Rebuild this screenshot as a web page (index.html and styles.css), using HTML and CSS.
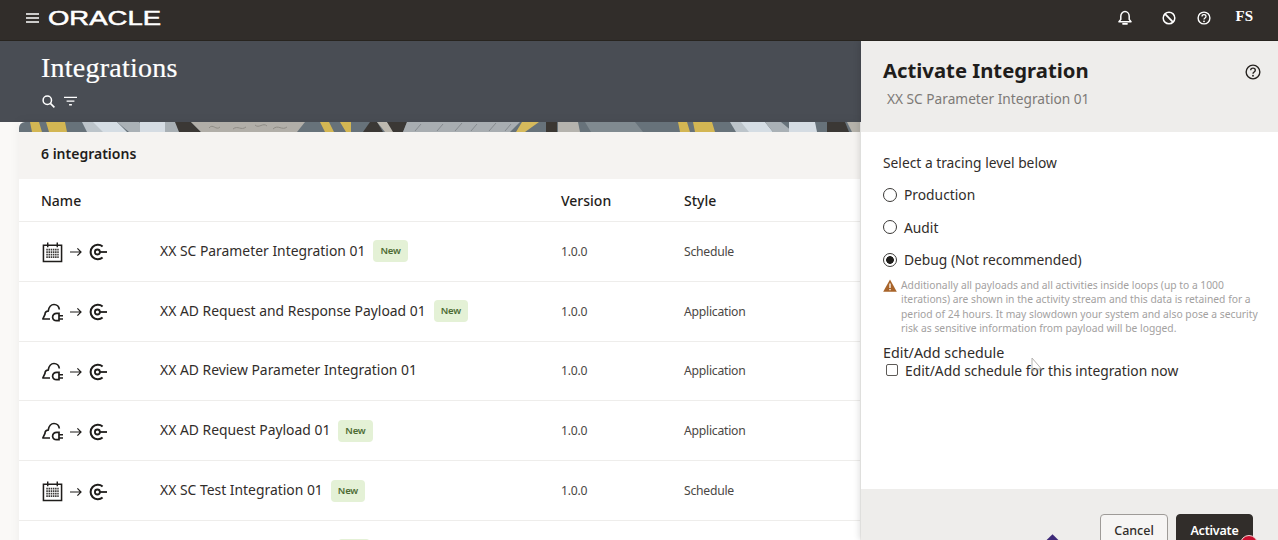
FILE: index.html
```html
<!DOCTYPE html>
<html lang="en">
<head>
  <meta charset="UTF-8" />
  <title>Integrations</title>
  <link rel="stylesheet" href="styles.css">
</head>
<body>
  <svg class="icon-defs" width="0" height="0">
    <defs>
      <symbol id="ico-calendar" viewBox="0 0 22 22">
        <path d="M1.5 3.5h19v17h-19z" fill="none" stroke="#1f1d1b" stroke-width="1.6"/>
        <path d="M6 0.5v5M16 0.5v5" fill="none" stroke="#1f1d1b" stroke-width="1.5"/>
        <path d="M4.500 8h13M4.500 10.600h13M4.500 13.200h13M4.500 15.800h13" fill="none" stroke="#3a3836" stroke-width="1.700" stroke-dasharray="1.600 0.700"/>
      </symbol>
      <symbol id="ico-cloud" viewBox="0 0 21 18">
        <path d="M5 15.500H.8L3 10.800C2.900 8.800 4.500 7.300 6.200 7.600 6.800 3.800 9.200 1 12 1c2.800 0 5 2.200 5.300 5" fill="none" stroke="#1f1d1b" stroke-width="1.700" stroke-linejoin="round"/>
        <path d="M5 15.500h3M17 12.200h4M17 15.400h4" fill="none" stroke="#1f1d1b" stroke-width="1.500"/>
        <path d="M17 9.800h-2.400a4 4 0 0 0-4 4 4 4 0 0 0 4 3.400H17z" fill="none" stroke="#1f1d1b" stroke-width="1.700"/>
      </symbol>
      <symbol id="ico-arrow" viewBox="0 0 12 10">
        <path d="M0 5h11M7.400 1.400 11 5 7.400 8.600" fill="none" stroke="#1f1d1b" stroke-width="1.200"/>
      </symbol>
      <symbol id="ico-connect" viewBox="0 0 18 18">
        <path d="M13.600 3.400A7.300 7.300 0 1 0 13.600 14.600" fill="none" stroke="#1f1d1b" stroke-width="2"/>
        <circle cx="8.400" cy="9" r="2.500" fill="none" stroke="#1f1d1b" stroke-width="1.800"/>
        <path d="M10.500 9H18" stroke="#1f1d1b" stroke-width="1.800"/>
      </symbol>
    </defs>
  </svg>

  <header class="topbar">
    <div class="brand">
      <svg class="menu-icon" width="13" height="10" viewBox="0 0 13 10"><path d="M0 1h13M0 5h13M0 9h13" stroke="#fff" stroke-width="1.400"/></svg>
      <svg class="logo" width="114" height="20" viewBox="0 0 114 20"><text x="0" y="16.500" textLength="113" lengthAdjust="spacingAndGlyphs">ORACLE</text></svg>
    </div>
    <div class="top-actions">
      <svg class="bell" width="14" height="16" viewBox="0 0 14 16"><path d="M1 11.800h12l-1.800-2.400V6.200C11.200 3.600 9.400 1.600 7 1.600S2.800 3.600 2.800 6.200v3.200z" fill="none" stroke="#fff" stroke-width="1.500" stroke-linejoin="round"/><path d="M5 13.800h4" stroke="#fff" stroke-width="1.800" stroke-linecap="round"/></svg>
      <svg class="block" width="14" height="14" viewBox="0 0 14 14"><circle cx="7" cy="7" r="5.800" fill="none" stroke="#fff" stroke-width="1.500"/><path d="M3.200 3.200l7.600 7.600" stroke="#fff" stroke-width="1.800"/></svg>
      <svg class="help" width="14" height="14" viewBox="0 0 14 14"><circle cx="7" cy="7" r="5.900" fill="none" stroke="#fff" stroke-width="1.400"/><path d="M5 5.400C5 4.200 6 3.600 7 3.600s2 .7 2 1.800C9 7 7 6.900 7 8.500" fill="none" stroke="#fff" stroke-width="1.300"/><circle cx="7" cy="10.300" r=".9" fill="#fff"/></svg>
      <span class="avatar">FS</span>
    </div>
  </header>

  <div class="main">
    <div class="page">
      <section class="hero">
        <h1>Integrations</h1>
        <div class="hero-tools">
          <svg width="13" height="13" viewBox="0 0 13 13"><circle cx="5.300" cy="5.300" r="4.200" fill="none" stroke="#fff" stroke-width="1.500"/><path d="M8.400 8.400l4 4" stroke="#fff" stroke-width="1.600"/></svg>
          <svg width="13" height="11" viewBox="0 0 14 11"><path d="M0 1h14M2.800 5h8.400M5.500 9h3" stroke="#fff" stroke-width="1.400"/></svg>
        </div>
      </section>
      <div class="list-wrap">
        <svg class="banner" width="841" height="10" viewBox="0 0 841 10" preserveAspectRatio="none">
          <rect width="841" height="10" fill="#67727a"/>
          <path d="M11 0h9l3 10H13zM27 0h19l2 10H30z" fill="#d3b653"/>
          <path d="M63 0h14l8 10H68z" fill="#bcc4ca"/>
          <path d="M74 0h24l10 10H84z" fill="#d5dde4"/>
          <path d="M98 0h22l10 10h-20z" fill="#aab1b6"/>
          <path d="M121 0h30l3 10h-33z" fill="#d5dce3"/>
          <path d="M146 0h11l5 10h-16z" fill="#a8afb4"/>
          <path d="M156 0h16l10 10h-22z" fill="#3b3835"/>
          <path d="M172 0h114l-8 10H182z" fill="#b1aea8"/>
          <path d="M190 6c4-5 7 3 11-1M214 7c5-4 8 2 13-2M236 3c4 4 8-3 12 1M254 7c5-5 9 2 14-2" fill="none" stroke="#8f8c86" stroke-width="1"/>
          <path d="M301 0h9l5 10h-9zM321 0h11v10h-5z" fill="#d3b653"/>
          <path d="M351 0h7l6 10h-20z" fill="#3b3835"/>
          <path d="M358 0h10l8 10h-10z" fill="#bdb9b0"/>
          <path d="M368 0h20l-4 10h-10z" fill="#3b3835"/>
          <path d="M388 0h113l-10 10H384z" fill="#a8adb1"/>
          <path d="M396 9l6-7M418 9l6-7M436 9l7-8M452 9l6-7M470 9l7-8M486 9l6-7" fill="none" stroke="#858a8e" stroke-width="1"/>
          <path d="M503 0h17l-14 10h-9z" fill="#d6ba5c"/>
          <path d="M527 0h11v10h-11z" fill="#3b3733"/>
          <path d="M539 0h20l2 10h-22z" fill="#b5b3ae"/>
          <path d="M566 0h50l8 10h-52z" fill="#808a90"/>
          <path d="M659 0h9l3 10h-10zM674 0h19l3 10h-20z" fill="#d3b653"/>
          <path d="M711 0h14l6 10h-14z" fill="#bcc4ca"/>
          <path d="M722 0h24l8 10h-24z" fill="#d5dde4"/>
          <path d="M746 0h16l12 10h-20z" fill="#aab1b6"/>
          <path d="M770 0h26l2 10h-28z" fill="#d5dce3"/>
          <path d="M808 0h18l4 10h-22z" fill="#3b3835"/>
          <path d="M828 0h13v10h-8z" fill="#b5b2aa"/>
        </svg>
        <div class="count-bar">6 integrations</div>
        <div class="table">
          <div class="row head">
            <div class="col-name">Name</div>
            <div class="col-version">Version</div>
            <div class="col-style">Style</div>
          </div>
          <div class="row">
            <div class="pattern">
              <svg class="ico-trigger" width="21" height="21"><use href="#ico-calendar"/></svg>
              <svg class="ico-arrow"><use href="#ico-arrow"/></svg>
              <svg class="ico-connect"><use href="#ico-connect"/></svg>
            </div>
            <div class="int-name">XX SC Parameter Integration 01 <span class="badge">New</span></div>
            <div class="col-version small">1.0.0</div>
            <div class="col-style small">Schedule</div>
          </div>
          <div class="row">
            <div class="pattern">
              <svg class="ico-trigger" width="21" height="21"><use href="#ico-cloud"/></svg>
              <svg class="ico-arrow"><use href="#ico-arrow"/></svg>
              <svg class="ico-connect"><use href="#ico-connect"/></svg>
            </div>
            <div class="int-name">XX AD Request and Response Payload 01 <span class="badge">New</span></div>
            <div class="col-version small">1.0.0</div>
            <div class="col-style small">Application</div>
          </div>
          <div class="row">
            <div class="pattern">
              <svg class="ico-trigger" width="21" height="21"><use href="#ico-cloud"/></svg>
              <svg class="ico-arrow"><use href="#ico-arrow"/></svg>
              <svg class="ico-connect"><use href="#ico-connect"/></svg>
            </div>
            <div class="int-name">XX AD Review Parameter Integration 01</div>
            <div class="col-version small">1.0.0</div>
            <div class="col-style small">Application</div>
          </div>
          <div class="row">
            <div class="pattern">
              <svg class="ico-trigger" width="21" height="21"><use href="#ico-cloud"/></svg>
              <svg class="ico-arrow"><use href="#ico-arrow"/></svg>
              <svg class="ico-connect"><use href="#ico-connect"/></svg>
            </div>
            <div class="int-name">XX AD Request Payload 01 <span class="badge">New</span></div>
            <div class="col-version small">1.0.0</div>
            <div class="col-style small">Application</div>
          </div>
          <div class="row">
            <div class="pattern">
              <svg class="ico-trigger" width="21" height="21"><use href="#ico-calendar"/></svg>
              <svg class="ico-arrow"><use href="#ico-arrow"/></svg>
              <svg class="ico-connect"><use href="#ico-connect"/></svg>
            </div>
            <div class="int-name">XX SC Test Integration 01 <span class="badge">New</span></div>
            <div class="col-version small">1.0.0</div>
            <div class="col-style small">Schedule</div>
          </div>
          <div class="row">
            <div class="int-name next-row"><span class="badge badge-empty"></span></div>
          </div>
        </div>
      </div>
    </div>

    <aside class="drawer">
      <div class="drawer-head">
        <div>
          <h2>Activate Integration</h2>
          <div class="drawer-sub">XX SC Parameter Integration 01</div>
        </div>
        <svg class="drawer-help" width="16" height="16" viewBox="0 0 14 14"><circle cx="7" cy="7" r="6" fill="none" stroke="#25221f" stroke-width="1.200"/><path d="M5 5.400C5 4.200 6 3.600 7 3.600s2 .7 2 1.800C9 7 7 6.900 7 8.500" fill="none" stroke="#25221f" stroke-width="1.200"/><circle cx="7" cy="10.300" r=".8" fill="#25221f"/></svg>
      </div>
      <div class="drawer-body">
        <div class="field-title">Select a tracing level below</div>
        <label class="radio"><input type="radio" name="level"> Production</label>
        <label class="radio"><input type="radio" name="level"> Audit</label>
        <label class="radio"><input type="radio" name="level" checked> Debug (Not recommended)</label>
        <div class="warning">
          <svg width="14" height="13" viewBox="0 0 14 13"><path d="M7 0.500 13.800 12.800H.2z" fill="#a8642a"/><path d="M7 4.500v4.400M7 10v1.200" stroke="#fff" stroke-width="1.300"/></svg>
          <p>Additionally all payloads and all activities inside loops (up to a 1000<br>iterations) are shown in the activity stream and this data is retained for a<br>period of 24 hours. It may slowdown your system and also pose a security<br>risk as sensitive information from payload will be logged.</p>
        </div>
        <div class="schedule-title">Edit/Add schedule</div>
        <label class="check"><input type="checkbox"> Edit/Add schedule for this integration now</label>
      </div>
      <div class="drawer-foot">
        <button class="btn">Cancel</button>
        <button class="btn btn-dark">Activate</button>
      </div>
      <svg class="pointer" width="12" height="17" viewBox="0 0 12 17"><path d="M1 1v14l3.500-3h6z" fill="none" stroke="#b5b3b1" stroke-width="1"/></svg>
      <span class="marker-diamond"></span>
      <span class="marker-dot"></span>
    </aside>
  </div>
</body>
</html>
```
FILE: styles.css
```css
* {
  box-sizing: border-box;
}
html, body {
  height: 100%;
}
body {
  margin: 0;
  font-family: "Noto Sans", "Open Sans", sans-serif;
  color: #2b2826;
  overflow: hidden;
  background: #fff;
}
.icon-defs {
  position: absolute;
}
.topbar {
  height: 41px;
  background: #312d2a;
  border-bottom: 1px solid #27241f;
  display: flex;
  justify-content: space-between;
  align-items: center;
  padding: 0 25px 5px 26px;
  color: white;
}
.brand {
  display: flex;
  align-items: center;
  gap: 9px;
}
.logo text {
  font-family: "Liberation Sans", sans-serif;
  font-size: 20px;
  font-weight: 400;
  fill: #fff;
  stroke: #fff;
  stroke-width: 0.5px;
}
.top-actions {
  display: flex;
  align-items: center;
}
.top-actions .bell {
  margin-right: 30px;
}
.top-actions .block {
  margin-right: 21px;
}
.top-actions .help {
  margin-right: 24px;
}
.avatar {
  font-family: "Liberation Serif", serif;
  font-size: 15px;
  font-weight: 700;
  margin-top: -3px;
}
.main {
  display: flex;
  height: 499px;
  overflow: hidden;
}
.page {
  width: 861px;
  background: #faf9f7;
  overflow: hidden;
}
.hero {
  height: 81px;
  background: #494d54;
  padding: 10px 41px 0;
  color: white;
}
.hero h1 {
  margin: 0;
  font-family: "Liberation Serif", serif;
  font-size: 28px;
  font-weight: 400;
  line-height: 34px;
  letter-spacing: 0.25px;
  -webkit-text-stroke: 0.2px #fff;
}
.hero-tools {
  display: flex;
  align-items: center;
  gap: 9px;
  margin: 10px 0 0 1px;
}
.list-wrap {
  margin-left: 19px;
  width: 841px;
  box-shadow: 0 0 10px rgba(0, 0, 0, 0.06);
}
.banner {
  display: block;
  border-radius: 6px 0 0 0;
  filter: blur(0.4px);
}
.count-bar {
  height: 47px;
  background: #f5f3f1;
  padding: 0 22px;
  line-height: 44px;
  font-size: 14px;
  font-weight: 600;
  color: #1f1d1b;
}
.table {
  background: white;
}
.row {
  display: grid;
  grid-template-columns: 119px 401px 123px 1fr;
  align-items: center;
  height: 59.8px;
  padding-left: 22px;
  border-bottom: 1px solid #eeedeb;
}
.row.head {
  height: 43px;
  font-size: 14px;
  font-weight: 500;
  color: #1f1d1b;
}
.col-name {
  grid-column: 1 / 3;
}
.pattern {
  display: flex;
  align-items: center;
  margin-top: 2px;
}
.ico-trigger {
  margin: 0 7px 0 1px;
}
.ico-arrow {
  width: 12px;
  height: 10px;
  margin-right: 7px;
}
.ico-connect {
  width: 18px;
  height: 18px;
}
.int-name {
  font-size: 13.900px;
  color: #312d2a;
  display: flex;
  align-items: center;
  gap: 8px;
  padding-bottom: 2px;
}
.next-row {
  grid-column: 2;
  margin-left: 178px;
}
.badge {
  background: #e4f1d6;
  color: #4c6b33;
  font-size: 9.500px;
  font-weight: 600;
  letter-spacing: -0.2px;
  border-radius: 4px;
  padding: 0 7px;
  line-height: 22px;
  height: 22px;
  margin-top: 2px;
}
.badge-empty {
  width: 32px;
}
.small {
  font-size: 12.200px;
  letter-spacing: -0.25px;
  color: #4a4744;
}
.drawer {
  position: relative;
  width: 417px;
  display: flex;
  flex-direction: column;
  background: white;
  box-shadow: -2px 0 6px rgba(0, 0, 0, 0.12);
}
.drawer-head {
  height: 91px;
  background: #eeedeb;
  padding: 14px 17px 0 22px;
  display: flex;
  justify-content: space-between;
  align-items: flex-start;
}
.drawer-head h2 {
  margin: 0;
  font-size: 20.300px;
  font-weight: 700;
  line-height: 30px;
  color: #1f1d1b;
}
.drawer-sub {
  margin: 4px 0 0 4px;
  font-size: 13.700px;
  line-height: 20px;
  color: #7d7a77;
}
.drawer-help {
  margin-top: 9px;
}
.drawer-body {
  flex: 1;
  padding: 20px 22px 0;
  font-size: 13.800px;
  color: #312d2a;
}
.field-title {
  line-height: 21px;
  margin-bottom: 11px;
}
.radio {
  display: flex;
  align-items: center;
  gap: 7px;
  height: 21px;
  margin-bottom: 11.500px;
}
.radio input {
  appearance: none;
  width: 14px;
  height: 14px;
  margin: 0;
  border: 1.300px solid #3a3836;
  border-radius: 50%;
  background: white;
}
.radio input:checked {
  background: radial-gradient(circle, #1f1d1b 0, #1f1d1b 3.500px, #fff 4.200px);
}
.warning {
  display: flex;
  gap: 4px;
  margin-top: -4px;
}
.warning svg {
  flex-shrink: 0;
  margin-top: 1px;
}
.warning p {
  margin: 0;
  font-size: 10.300px;
  line-height: 14.600px;
  color: #a3a19f;
  white-space: nowrap;
}
.schedule-title {
  margin-top: 8px;
  line-height: 17px;
  font-size: 14.300px;
}
.check {
  display: flex;
  align-items: center;
  gap: 7px;
  margin-left: 3px;
  height: 19px;
}
.check input {
  appearance: none;
  width: 12px;
  height: 12px;
  margin: 0;
  border: 1px solid #5d5a57;
  border-radius: 2px;
  background: white;
}
.drawer-foot {
  height: 51px;
  background: #eeedeb;
  padding: 25px 25px 0 0;
  display: flex;
  justify-content: flex-end;
  align-items: flex-start;
  gap: 8px;
}
.btn {
  flex-shrink: 0;
  height: 32px;
  width: 68px;
  padding: 0;
  font-family: inherit;
  font-size: 12.500px;
  font-weight: 500;
  color: #312d2a;
  background: #f6f5f4;
  border: 1px solid #9e9b98;
  border-radius: 4px;
}
.btn-dark {
  width: 77px;
  background: #312d2a;
  border-color: #312d2a;
  color: white;
  font-weight: 600;
  letter-spacing: -0.2px;
}
.pointer {
  position: absolute;
  left: 170px;
  top: 316px;
}
.marker-diamond {
  position: absolute;
  left: 187px;
  top: 495px;
  width: 9px;
  height: 9px;
  background: #3d2a78;
  transform: rotate(45deg);
}
.marker-dot {
  position: absolute;
  left: 379px;
  top: 494px;
  width: 18px;
  height: 18px;
  border-radius: 50%;
  background: #c8102e;
  border: 1px solid #f3d6d6;
}
```
